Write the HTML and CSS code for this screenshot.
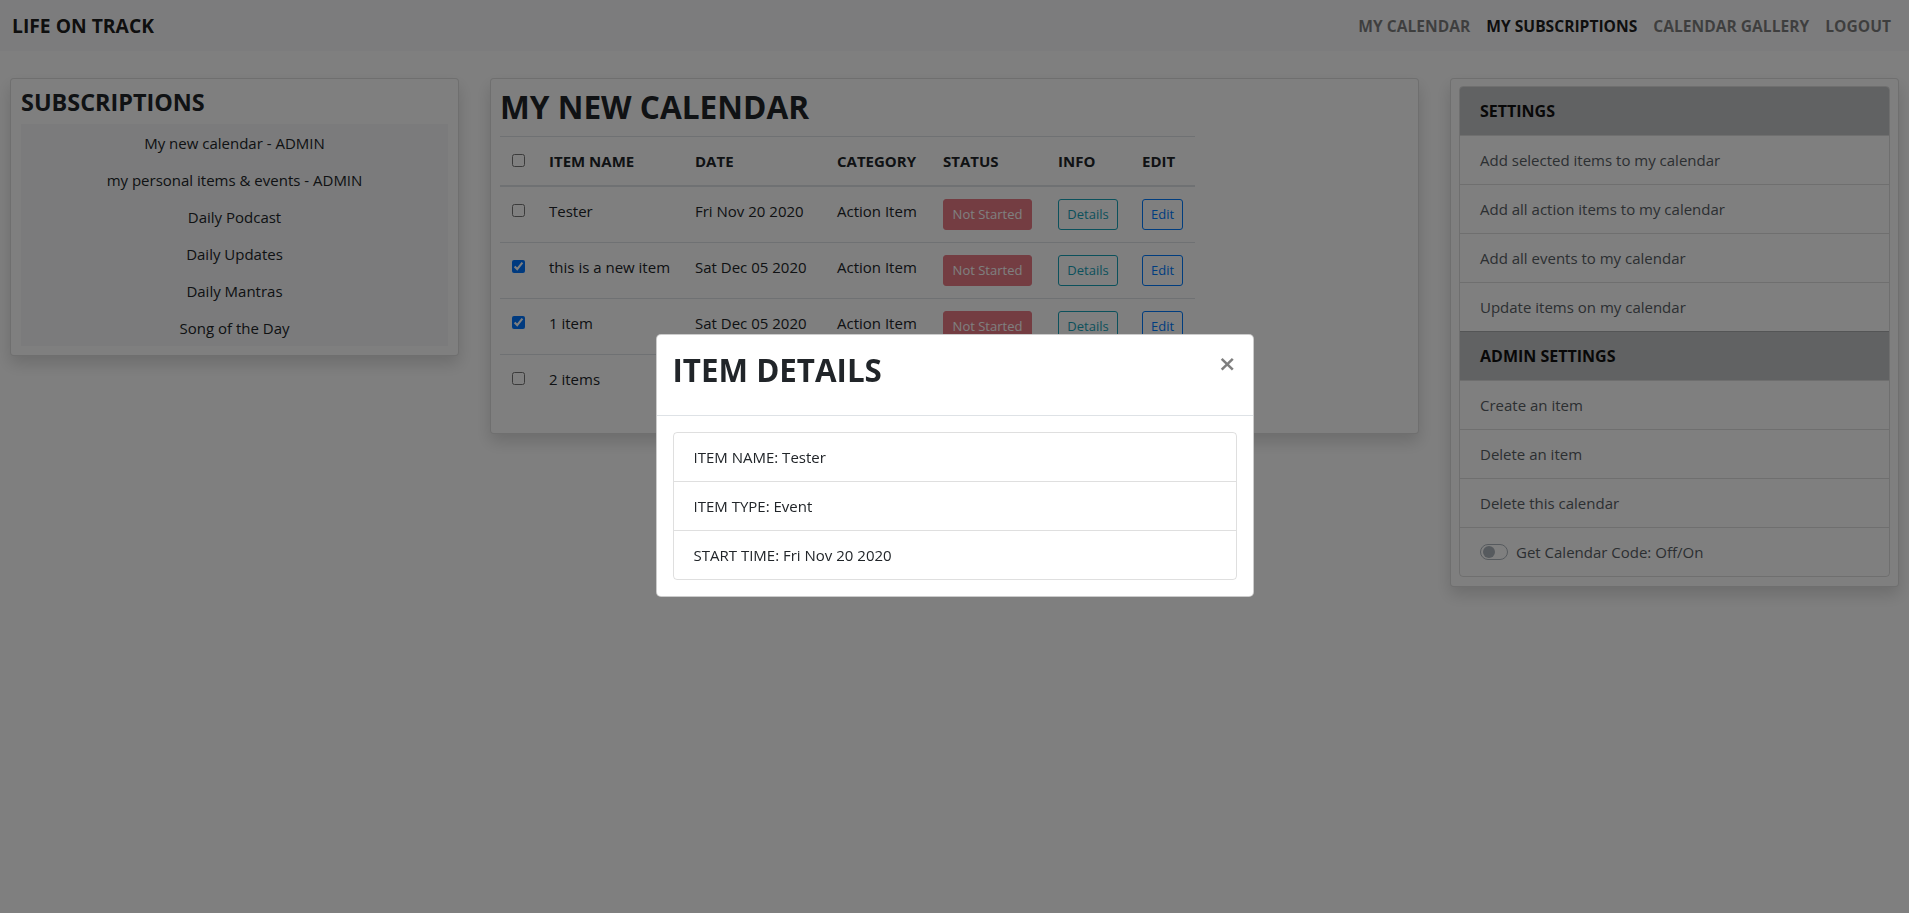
FILE: index.html
```html
<!DOCTYPE html>
<html lang="en">
<head>
<meta charset="utf-8">
<title>Life On Track</title>
<link rel="stylesheet" href="styles.css">
</head>
<body>
<nav class="navbar">
  <a class="brand">LIFE ON TRACK</a>
  <div class="nav-links">
    <a class="nav-link">MY CALENDAR</a>
    <a class="nav-link active">MY SUBSCRIPTIONS</a>
    <a class="nav-link">CALENDAR GALLERY</a>
    <a class="nav-link">LOGOUT</a>
  </div>
</nav>

<main class="layout">
  <section class="card sub-card">
    <h4 class="sub-title">SUBSCRIPTIONS</h4>
    <div class="sub-list">
      <div class="sub-item">My new calendar - ADMIN</div>
      <div class="sub-item">my personal items &amp; events - ADMIN</div>
      <div class="sub-item">Daily Podcast</div>
      <div class="sub-item">Daily Updates</div>
      <div class="sub-item">Daily Mantras</div>
      <div class="sub-item">Song of the Day</div>
    </div>
  </section>

  <section class="card cal-card">
    <h2 class="cal-title">MY NEW CALENDAR</h2>
    <table class="items">
      <colgroup>
        <col class="c-check"><col class="c-name"><col class="c-date"><col class="c-cat"><col class="c-status"><col class="c-info"><col class="c-edit">
      </colgroup>
      <thead>
        <tr>
          <th><input type="checkbox" class="chk"></th>
          <th>ITEM NAME</th>
          <th>DATE</th>
          <th>CATEGORY</th>
          <th>STATUS</th>
          <th>INFO</th>
          <th>EDIT</th>
        </tr>
      </thead>
      <tbody>
        <tr>
          <td><input type="checkbox" class="chk"></td>
          <td>Tester</td>
          <td>Fri Nov 20 2020</td>
          <td>Action Item</td>
          <td><span class="btn btn-danger">Not Started</span></td>
          <td><span class="btn btn-info">Details</span></td>
          <td><span class="btn btn-primary">Edit</span></td>
        </tr>
        <tr>
          <td><input type="checkbox" class="chk" checked></td>
          <td>this is a new item</td>
          <td>Sat Dec 05 2020</td>
          <td>Action Item</td>
          <td><span class="btn btn-danger">Not Started</span></td>
          <td><span class="btn btn-info">Details</span></td>
          <td><span class="btn btn-primary">Edit</span></td>
        </tr>
        <tr>
          <td><input type="checkbox" class="chk" checked></td>
          <td>1 item</td>
          <td>Sat Dec 05 2020</td>
          <td>Action Item</td>
          <td><span class="btn btn-danger">Not Started</span></td>
          <td><span class="btn btn-info">Details</span></td>
          <td><span class="btn btn-primary">Edit</span></td>
        </tr>
        <tr>
          <td><input type="checkbox" class="chk"></td>
          <td>2 items</td>
          <td>Sat Dec 05 2020</td>
          <td>Action Item</td>
          <td><span class="btn btn-danger">Not Started</span></td>
          <td><span class="btn btn-info">Details</span></td>
          <td><span class="btn btn-primary">Edit</span></td>
        </tr>
      </tbody>
    </table>
  </section>

  <section class="card set-card">
    <div class="set-list">
      <div class="set-item set-head">SETTINGS</div>
      <div class="set-item">Add selected items to my calendar</div>
      <div class="set-item">Add all action items to my calendar</div>
      <div class="set-item">Add all events to my calendar</div>
      <div class="set-item">Update items on my calendar</div>
      <div class="set-item set-head">ADMIN SETTINGS</div>
      <div class="set-item">Create an item</div>
      <div class="set-item">Delete an item</div>
      <div class="set-item">Delete this calendar</div>
      <div class="set-item switch-row">
        <span class="switch"><span class="knob"></span></span>
        <span class="switch-label">Get Calendar Code: Off/On</span>
      </div>
    </div>
  </section>
</main>

<div class="backdrop"></div>
<div class="modal">
  <div class="modal-content">
    <div class="modal-header">
      <h2 class="modal-title">ITEM DETAILS</h2>
      <span class="close">&times;</span>
    </div>
    <div class="modal-body">
      <div class="detail-list">
        <div class="detail-item">ITEM NAME: Tester</div>
        <div class="detail-item">ITEM TYPE: Event</div>
        <div class="detail-item">START TIME: Fri Nov 20 2020</div>
      </div>
    </div>
  </div>
</div>
</body>
</html>
```
FILE: styles.css
```css
* { box-sizing: border-box; }
html, body { margin: 0; padding: 0; }
body {
  font-family: "Open Sans", "Noto Sans", sans-serif;
  font-size: 15px;
  line-height: 24px;
  color: #212529;
  background: #fff;
  width: 1909px;
  height: 913px;
  overflow: hidden;
}

/* navbar */
.navbar {
  height: 51px;
  display: flex;
  align-items: center;
  justify-content: space-between;
  padding: 0 10px 0 12px;
  background: #f8f9fa;
}
.brand {
  font-size: 19.3px;
  font-weight: 700;
  color: rgba(0,0,0,.9);
}
.nav-links { display: flex; }
.nav-link {
  padding: 0 8px;
  font-size: 15.6px;
  font-weight: 700;
  color: rgba(0,0,0,.5);
}
.nav-link.active { color: rgba(0,0,0,.9); }

/* layout */
.layout {
  display: grid;
  grid-template-columns: 449px 1fr 449px;
  column-gap: 31px;
  align-items: start;
  padding: 27px 10px 0 10px;
}
.card {
  background: #fff;
  border: 1px solid rgba(0,0,0,.125);
  border-radius: 4px;
  box-shadow: 0 8px 16px rgba(0,0,0,.15);
  padding: 9px;
}

/* subscriptions */
.sub-title {
  margin: 0 0 7px 1px;
  font-size: 23.4px;
  line-height: 29px;
  font-weight: 700;
}
.sub-list {
  background: #f6f7f8;
  margin: 0 1px;
}
.sub-item {
  text-align: center;
  padding: 6.5px 0;
}

/* calendar */
.cal-title {
  margin: 0 0 10px 0;
  font-size: 31.6px;
  line-height: 38px;
  font-weight: 700;
}
.items {
  border-collapse: collapse;
  table-layout: fixed;
  width: 695px;
  margin-bottom: 14px;
}
.c-check { width: 37px; }
.c-name { width: 146px; }
.c-date { width: 142px; }
.c-cat { width: 106px; }
.c-status { width: 115px; }
.c-info { width: 84px; }
.c-edit { width: 65px; }
.items th, .items td {
  padding: 12px;
  text-align: left;
  vertical-align: top;
  border-top: 1px solid #dee2e6;
  white-space: nowrap;
}
.items th {
  font-weight: 700;
  border-bottom: 2px solid #dee2e6;
}
.items thead + tbody tr:first-child td { border-top: 0; }
.chk {
  margin: 5px 0 0 0;
  width: 13px;
  height: 13px;
  vertical-align: top;
}
.btn {
  display: inline-block;
  font-size: 13px;
  line-height: 21px;
  padding: 4px 8px;
  border: 1px solid transparent;
  border-radius: 3px;
  text-align: center;
}
.btn-danger { background: #dc3545; border-color: #dc3545; color: #fff; width: 89px; opacity: .65; }
.btn-info { color: #17a2b8; border-color: #17a2b8; width: 60px; }
.btn-primary { color: #007bff; border-color: #007bff; width: 41px; }

/* settings */
.set-card { padding: 7px 8px 9px 8px; }
.set-list {
  border: 1px solid rgba(0,0,0,.125);
  border-radius: 4px;
  overflow: hidden;
}
.set-item {
  padding: 12px 20px;
  line-height: 24px;
  color: #585e64;
  border-top: 1px solid rgba(0,0,0,.125);
}
.set-item:first-child { border-top: 0; height: 48px; }
.set-head {
  background: #c2c4c6;
  color: #111;
  font-weight: 700;
  font-size: 16px;
}
.switch-row { display: flex; align-items: center; }
.switch {
  position: relative;
  width: 28px;
  height: 16px;
  border: 1px solid #adb5bd;
  border-radius: 8px;
  background: #fff;
  margin-right: 8px;
}
.knob {
  position: absolute;
  left: 2px;
  top: 1px;
  width: 12px;
  height: 12px;
  border-radius: 50%;
  background: #adb5bd;
}

/* modal */
.backdrop {
  position: fixed;
  inset: 0;
  background: rgba(0,0,0,.5);
}
.modal {
  position: fixed;
  inset: 0;
  padding-top: 334px;
}
.modal-content {
  width: 598px;
  margin: 0 auto;
  background: #fff;
  border: 1px solid rgba(0,0,0,.2);
  border-radius: 5px;
}
.modal-header {
  display: flex;
  justify-content: space-between;
  align-items: flex-start;
  padding: 16px;
  border-bottom: 1px solid #dee2e6;
}
.modal-title {
  margin: 0 0 10px 0;
  font-size: 31.3px;
  line-height: 38px;
  font-weight: 700;
}
.close {
  font-family: "DejaVu Sans", "Open Sans", sans-serif;
  font-size: 22px;
  line-height: 24px;
  font-weight: 700;
  color: #000;
  opacity: .5;
  margin: 1px 0 0 0;
}
.modal-body { padding: 16px; }
.detail-list {
  border: 1px solid rgba(0,0,0,.125);
  border-radius: 4px;
}
.detail-item {
  padding: 12px 20px;
  border-top: 1px solid rgba(0,0,0,.125);
}
.detail-item:first-child { border-top: 0; }
```
